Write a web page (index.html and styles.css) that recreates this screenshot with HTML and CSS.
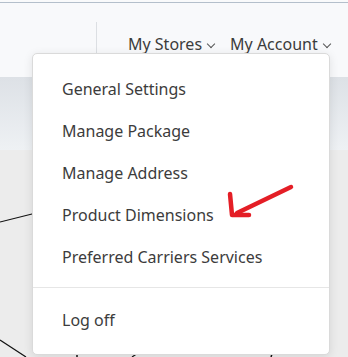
FILE: index.html
```html
<!DOCTYPE html>
<html lang="en">
<head>
    <meta charset="UTF-8">
    <meta name="viewport" content="width=device-width, initial-scale=1.0">
    <title>My Account</title>
    <link rel="stylesheet" href="styles.css">
</head>
<body>
    <div class="page">
        <div class="top-strip"></div>
        <header class="header">
            <div class="divider"></div>
            <nav class="nav">
                <a class="nav-link" href="#">My Stores <span class="chev"></span></a>
                <a class="nav-link" href="#">My Account <span class="chev"></span></a>
            </nav>
        </header>
        <div class="band"></div>
        <div class="canvas">
            <svg class="chart-lines" width="348" height="207" viewBox="0 0 348 207">
                <path d="M0 72 L40 62" stroke="#111" stroke-width="1.2" fill="none"/>
                <path d="M0 190 L26 207" stroke="#111" stroke-width="1.2" fill="none"/>
                <path d="M77 205 L77 207" stroke="#111" stroke-width="1.5"/>
                <path d="M132 207 L138 203" stroke="#111" stroke-width="1.2"/>
                <path d="M272 204 L271 207" stroke="#111" stroke-width="1.5"/>
            </svg>
        </div>

        <div class="dropdown">
            <ul class="menu">
                <li><a href="#">General Settings</a></li>
                <li><a href="#">Manage Package</a></li>
                <li><a href="#">Manage Address</a></li>
                <li><a href="#">Product Dimensions</a></li>
                <li><a href="#">Preferred Carriers Services</a></li>
            </ul>
            <hr class="menu-sep">
            <ul class="menu menu-last">
                <li><a href="#">Log off</a></li>
            </ul>
        </div>

        <svg class="arrow" width="80" height="50" viewBox="0 0 80 50">
            <path d="M69 10 L15 36" stroke="#e41e26" stroke-width="4.5" stroke-linecap="round" fill="none"/>
            <path d="M8 17 L10 38 L27 38" stroke="#e41e26" stroke-width="4.5" stroke-linecap="round" stroke-linejoin="round" fill="none"/>
        </svg>
    </div>
</body>
</html>
```

FILE: styles.css
```css
* {
    box-sizing: border-box;
}
body {
    margin: 0;
    background-color: #ececec;
    font-family: 'Noto Sans', 'Open Sans', sans-serif;
    color: #3c3c3c;
}
.page {
    position: relative;
    width: 348px;
    height: 357px;
    overflow: hidden;
}
.top-strip {
    height: 2px;
    background-color: #f9fafb;
}
.header {
    height: 75px;
    border-top: 1px solid #b4bfcb;
    background-color: #f8f9fb;
    display: flex;
    align-items: flex-start;
}
.divider {
    width: 1px;
    height: 33px;
    margin: 19px 0 0 96px;
    background-color: #dcdfe3;
}
.nav {
    display: flex;
    gap: 15px;
    margin: 30px 0 0 31px;
}
.nav-link {
    font-size: 16px;
    color: #3c3c3c;
    text-decoration: none;
    display: flex;
    align-items: center;
    gap: 5px;
}
.chev {
    width: 8px;
    height: 5px;
}
.chev::before {
    content: "";
    display: block;
    width: 5px;
    height: 5px;
    border-right: 1px solid #555;
    border-bottom: 1px solid #555;
    transform: translate(1px, -1px) rotate(45deg);
}
.band {
    height: 73px;
    background: linear-gradient(#dde1e6, #eef1f4);
}
.canvas {
    height: 207px;
}
.chart-lines {
    display: block;
}
.dropdown {
    position: absolute;
    left: 32px;
    top: 53px;
    width: 298px;
    height: 302px;
    background-color: #fff;
    border: 1px solid #dadada;
    border-radius: 5px;
    box-shadow: 0 2px 10px rgba(0, 0, 0, 0.1);
    padding-top: 14px;
}
.menu {
    list-style: none;
    margin: 0;
    padding: 0;
}
.menu li a {
    display: flex;
    align-items: center;
    height: 42px;
    padding-left: 29px;
    font-size: 16px;
    color: #3c3c3c;
    text-decoration: none;
}
.menu-sep {
    border: none;
    border-top: 1px solid #e6e6e6;
    margin: 9px 0 11px;
}
.arrow {
    position: absolute;
    left: 222px;
    top: 177px;
}
```
